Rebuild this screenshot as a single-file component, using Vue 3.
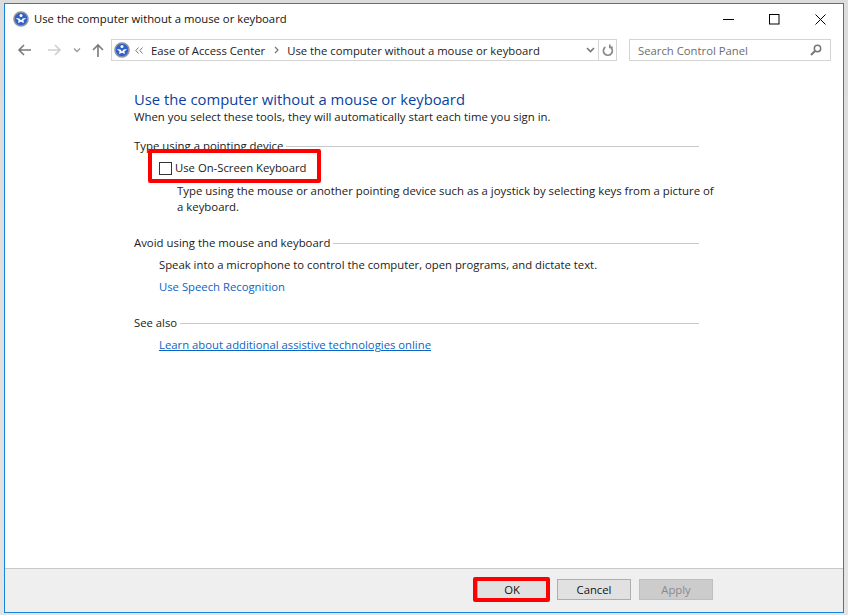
<script setup>
const sections = [
  { title: 'Avoid using the mouse and keyboard', text: 'Speak into a microphone to control the computer, open programs, and dictate text.', link: 'Use Speech Recognition' }
]
</script>

<template>
  <div class="screen">
    <div class="window">
      <header class="titlebar">
        <svg class="app-icon" width="16" height="16" viewBox="0 0 16 16">
          <circle cx="8" cy="8" r="7" fill="#2f62c8" stroke="#8e93a0" stroke-width="1.6" />
          <circle cx="8" cy="4.4" r="1.5" fill="#fff" />
          <path d="M2.8 7 L6.4 7.6 L8 9.6 L9.6 7.6 L13.2 7 L10.4 9.6 L11 12 L8 10.8 L5 12 L5.6 9.6 Z" fill="#fff" />
        </svg>
        <span class="title">Use the computer without a mouse or keyboard</span>
        <div class="controls">
          <svg width="11" height="11" viewBox="0 0 11 11"><path d="M0 5.5H11" stroke="#000" stroke-width="1" /></svg>
          <svg width="11" height="11" viewBox="0 0 11 11"><rect x=".5" y=".5" width="9.5" height="9.5" fill="none" stroke="#000" /></svg>
          <svg width="11" height="11" viewBox="0 0 11 11"><path d="M.5.5L10.5 10.5M10.5.5L.5 10.5" stroke="#000" stroke-width="1" /></svg>
        </div>
      </header>

      <nav class="navbar">
        <svg class="nav-btn" width="16" height="14" viewBox="0 0 16 14"><path d="M14 7H2M7 2L2 7l5 5" fill="none" stroke="#7a7a7a" stroke-width="1.6" /></svg>
        <svg class="nav-btn fwd" width="16" height="14" viewBox="0 0 16 14"><path d="M2 7H14M9 2l5 5-5 5" fill="none" stroke="#cfcfcf" stroke-width="1.6" /></svg>
        <svg class="nav-drop" width="8" height="6" viewBox="0 0 8 6"><path d="M1 1.5L4 4.5 7 1.5" fill="none" stroke="#9a9a9a" stroke-width="1.4" /></svg>
        <svg class="nav-up" width="14" height="15" viewBox="0 0 14 15"><path d="M7 14V2M2 7l5-5 5 5" fill="none" stroke="#7a7a7a" stroke-width="1.6" /></svg>

        <div class="address">
          <svg class="addr-icon" width="16" height="16" viewBox="0 0 16 16">
            <circle cx="8" cy="8" r="7" fill="#2f62c8" stroke="#8e93a0" stroke-width="1.6" />
            <circle cx="8" cy="4.4" r="1.5" fill="#fff" />
            <path d="M2.8 7 L6.4 7.6 L8 9.6 L9.6 7.6 L13.2 7 L10.4 9.6 L11 12 L8 10.8 L5 12 L5.6 9.6 Z" fill="#fff" />
          </svg>
          <svg class="chev-dbl" width="8" height="7" viewBox="0 0 8 7"><path d="M3.5.5L.8 3.5l2.7 3M7.5.5L4.8 3.5l2.7 3" fill="none" stroke="#777" /></svg>
          <span class="crumb">Ease of Access Center</span>
          <svg class="chev" width="5" height="8" viewBox="0 0 5 8"><path d="M1 1l3 3-3 3" fill="none" stroke="#777" stroke-width="1.2" /></svg>
          <span class="crumb">Use the computer without a mouse or keyboard</span>
          <svg class="addr-drop" width="9" height="6" viewBox="0 0 9 6"><path d="M1 1l3.5 3.5L8 1" fill="none" stroke="#777" stroke-width="1.6" /></svg>
          <div class="refresh">
            <svg width="12" height="13" viewBox="0 0 12 13"><path d="M7.6 2.6A4.5 4.5 0 1 1 3.4 3M7.8 .4V3.4H10.8" fill="none" stroke="#8a8a8a" stroke-width="1.7" /></svg>
          </div>
        </div>

        <div class="search">
          <span>Search Control Panel</span>
          <svg width="12" height="12" viewBox="0 0 12 12"><circle cx="7.5" cy="4.5" r="3.2" fill="none" stroke="#777" stroke-width="1.5" /><path d="M5 7L1 11" stroke="#777" stroke-width="2" /></svg>
        </div>
      </nav>

      <main class="content">
        <h1>Use the computer without a mouse or keyboard</h1>
        <p class="intro">When you select these tools, they will automatically start each time you sign in.</p>

        <section class="group first">
          <div class="group-head"><span>Type using a pointing device</span><i></i></div>
          <label class="check-row">
            <span class="checkbox"></span>
            <span>Use On-Screen Keyboard</span>
            <span class="redbox"></span>
          </label>
          <p class="desc">Type using the mouse or another pointing device such as a joystick by selecting keys from a picture of a keyboard.</p>
        </section>

        <section v-for="s in sections" :key="s.title" class="group second">
          <div class="group-head"><span>{{ s.title }}</span><i></i></div>
          <p class="body">{{ s.text }}</p>
          <a class="link">{{ s.link }}</a>
        </section>

        <section class="group third">
          <div class="group-head"><span>See also</span><i></i></div>
          <a class="link under">Learn about additional assistive technologies online</a>
        </section>
      </main>

      <footer class="footer">
        <button class="btn ok">OK<span class="redbox"></span></button>
        <button class="btn cancel">Cancel</button>
        <button class="btn apply" disabled>Apply</button>
      </footer>
    </div>
  </div>
</template>

<style>
html, body { margin: 0; background: #d8d8d8; }
</style>

<style scoped>
.screen {
  width: 848px;
  height: 615px;
  box-sizing: border-box;
  padding: 3px 4px 2px 4px;
  background: linear-gradient(#dcdcdc, #e4e4e4);
  font-family: "Open Sans", "Noto Sans", sans-serif;
  font-size: 11.3px;
  color: #1a1a1a;
}
.window {
  height: 100%;
  box-sizing: border-box;
  border: 1px solid #1883d7;
  background: #fff;
  display: flex;
  flex-direction: column;
}
.titlebar {
  height: 29px;
  display: flex;
  align-items: center;
  padding-left: 8px;
  flex: none;
}
.app-icon { margin-right: 5px; margin-top: 1px; }
.title { color: #111; }
.controls {
  margin-left: auto;
  display: flex;
  gap: 35px;
  padding-right: 17px;
  padding-top: 1px;
  align-items: center;
}
.navbar {
  height: 30px;
  box-sizing: border-box;
  padding: 4px 0 0 12px;
  display: flex;
  align-items: center;
  flex: none;
}
.nav-btn { flex: none; }
.fwd { margin-left: 13px; }
.nav-drop { margin-left: 11px; }
.nav-up { margin-left: 10px; margin-right: 6px; }
.address {
  width: 506px;
  height: 22px;
  box-sizing: border-box;
  border: 1px solid #d4d4d4;
  display: flex;
  align-items: center;
  padding-left: 2px;
}
.addr-icon { flex: none; }
.chev-dbl { margin-left: 5px; }
.crumb { margin-left: 8px; color: #222; white-space: nowrap; }
.chev { margin-left: 9px; }
.addr-drop { margin-left: auto; margin-right: 3px; }
.refresh {
  width: 17px;
  height: 100%;
  border-left: 1px solid #d4d4d4;
  display: flex;
  align-items: center;
  justify-content: center;
}
.search {
  margin-left: 12px;
  width: 202px;
  height: 22px;
  box-sizing: border-box;
  border: 1px solid #d4d4d4;
  display: flex;
  align-items: center;
  justify-content: space-between;
  padding: 0 8px;
  color: #6d6d6d;
}
.content {
  flex: 1;
  padding: 26px 0 0 129px;
  border-bottom: 1px solid #c8c8c8;
}
h1 {
  margin: 0;
  font-size: 14.8px;
  line-height: 20px;
  font-weight: 400;
  color: #0b3f9e;
}
p { margin: 0; }
.intro { font-size: 11.38px; line-height: 16px; }
.group { width: 565px; position: relative; }
.first { margin-top: 13px; }
.second { margin-top: 20px; }
.third { margin-top: 20px; }
.group-head {
  display: flex;
  align-items: center;
  line-height: 16px;
  gap: 3px;
}
.first .group-head span { font-size: 11.38px; }
.second .group-head span { font-size: 11.38px; }
.group-head i { flex: 1; height: 1px; background: #c8c8c8; }
.check-row {
  display: flex;
  align-items: center;
  gap: 3px;
  margin: 4px 0 0 25px;
  line-height: 20px;
  width: 150px;
  white-space: nowrap;
  position: relative;
}
.checkbox {
  width: 13px;
  height: 13px;
  box-sizing: border-box;
  border: 1px solid #333;
  background: #fff;
  flex: none;
}
.redbox {
  position: absolute;
  box-sizing: border-box;
  border: 4px solid #f00;
  border-radius: 2px;
  pointer-events: none;
}
.check-row .redbox { left: -11px; top: -9px; width: 173px; height: 34px; }
.ok .redbox { left: -5px; top: -3px; width: 77px; height: 25px; }
.desc { margin: 5px 0 0 43px; width: 540px; line-height: 16px; font-size: 11.38px; }
.body { margin: 6px 0 0 25px; line-height: 16px; }
.link { display: inline-block; margin: 6px 0 0 25px; line-height: 16px; color: #0b65c4; }
.under { text-decoration: underline; }
.footer {
  height: 43px;
  box-sizing: border-box;
  flex: none;
  background: #efefef;
  display: flex;
  align-items: flex-start;
  padding: 10px 130px 0 0;
  justify-content: flex-end;
  gap: 8px;
}
.btn {
  font: inherit;
  width: 74px;
  height: 21px;
  padding: 0;
  box-sizing: border-box;
  border: 1px solid #adadad;
  background: #e1e1e1;
  color: #111;
  position: relative;
}
.ok { margin-right: 2px; width: 70px; }
.apply { background: #ccc; border-color: #bfbfbf; color: #8a8a8a; }
</style>
